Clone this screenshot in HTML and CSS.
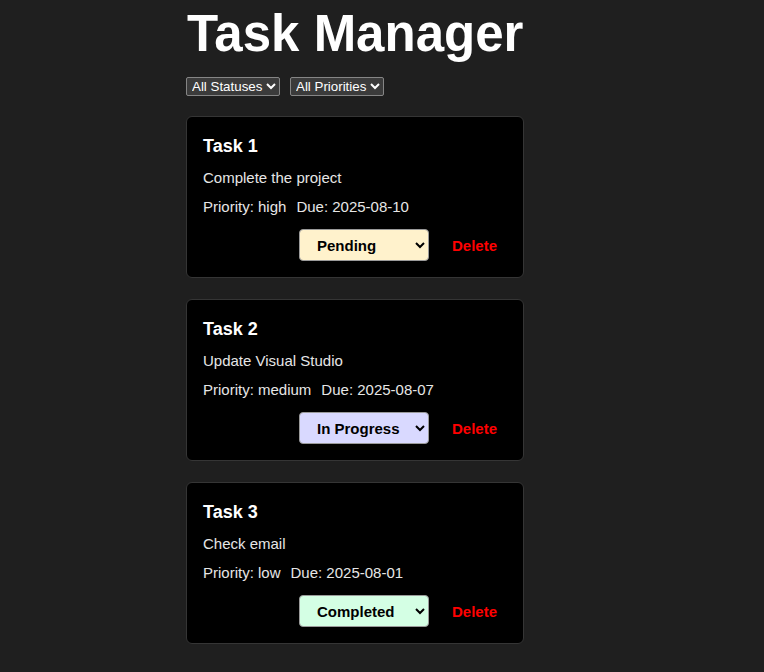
FILE: index.html
```html
<!DOCTYPE html>
<html lang="en">
<head>
<meta charset="utf-8">
<title>Task Manager</title>
<link rel="stylesheet" href="styles.css">
</head>
<body>
<main class="app">
  <h1 class="title">Task Manager</h1>
  <div class="filters">
    <select class="filter">
      <option>All Statuses</option>
      <option>Pending</option>
      <option>In Progress</option>
      <option>Completed</option>
    </select>
    <select class="filter">
      <option>All Priorities</option>
      <option>high</option>
      <option>medium</option>
      <option>low</option>
    </select>
  </div>
  <ul class="tasks">
    <li class="card">
      <h3 class="card-title">Task 1</h3>
      <p class="desc">Complete the project</p>
      <div class="meta"><span>Priority: high</span><span>Due: 2025-08-10</span></div>
      <div class="actions">
        <select class="status status-pending">
          <option selected>Pending</option>
          <option>In Progress</option>
          <option>Completed</option>
        </select>
        <button class="delete">Delete</button>
      </div>
    </li>
    <li class="card">
      <h3 class="card-title">Task 2</h3>
      <p class="desc">Update Visual Studio</p>
      <div class="meta"><span>Priority: medium</span><span>Due: 2025-08-07</span></div>
      <div class="actions">
        <select class="status status-progress">
          <option>Pending</option>
          <option selected>In Progress</option>
          <option>Completed</option>
        </select>
        <button class="delete">Delete</button>
      </div>
    </li>
    <li class="card">
      <h3 class="card-title">Task 3</h3>
      <p class="desc">Check email</p>
      <div class="meta"><span>Priority: low</span><span>Due: 2025-08-01</span></div>
      <div class="actions">
        <select class="status status-done">
          <option>Pending</option>
          <option>In Progress</option>
          <option selected>Completed</option>
        </select>
        <button class="delete">Delete</button>
      </div>
    </li>
  </ul>
</main>
</body>
</html>
```

FILE: styles.css
```css
html {
  color-scheme: dark;
}

body {
  margin: 0;
  background: #1f1f1f;
  color: #ffffff;
  font-family: "Liberation Sans", Arial, sans-serif;
}

.app {
  width: 338px;
  margin-left: 186px;
  padding-top: 5px;
}

.title {
  margin: 0 0 15px 1px;
  font-size: 51px;
  line-height: 57px;
  font-weight: 700;
  color: #ffffff;
}

.filters {
  display: flex;
  gap: 10px;
  margin-bottom: 20px;
}

.filter {
  height: 19px;
  font-family: "Liberation Sans", Arial, sans-serif;
  font-size: 13.33px;
  background-color: #3b3b3b;
  color: #ffffff;
  border: 1px solid #858585;
  border-radius: 2px;
  padding: 0 0 0 1px;
}

.tasks {
  list-style: none;
  margin: 0;
  padding: 0;
}

.card {
  background: #000000;
  border: 1px solid #353535;
  border-radius: 6px;
  padding: 16px;
  margin-bottom: 21px;
}

.card-title {
  margin: 3px 0 12px 0;
  font-size: 18px;
  line-height: 21px;
  font-weight: 700;
  color: #ffffff;
}

.desc {
  margin: 0 0 12px 0;
  font-size: 15px;
  line-height: 17px;
  color: #e6e6e6;
}

.meta {
  display: flex;
  gap: 10px;
  font-size: 15px;
  line-height: 17px;
  color: #e6e6e6;
  margin-bottom: 14px;
}

.actions {
  display: flex;
  justify-content: flex-end;
  align-items: center;
  gap: 13px;
}

.status {
  width: 130px;
  height: 32px;
  padding: 0 4px 0 13px;
  font-family: "Liberation Sans", Arial, sans-serif;
  font-size: 15px;
  font-weight: 700;
  color: #000000;
  border: 1px solid #9a9a9a;
  border-radius: 4px;
  color-scheme: light;
}

.status-pending {
  background-color: #fff2cc;
}

.status-progress {
  background-color: #d9d9ff;
}

.status-done {
  background-color: #d4ffe4;
}

.delete {
  background: transparent;
  border: none;
  padding: 6px 10px;
  font-family: "Liberation Sans", Arial, sans-serif;
  font-size: 15px;
  font-weight: 700;
  color: #ff0000;
  cursor: pointer;
}
```
